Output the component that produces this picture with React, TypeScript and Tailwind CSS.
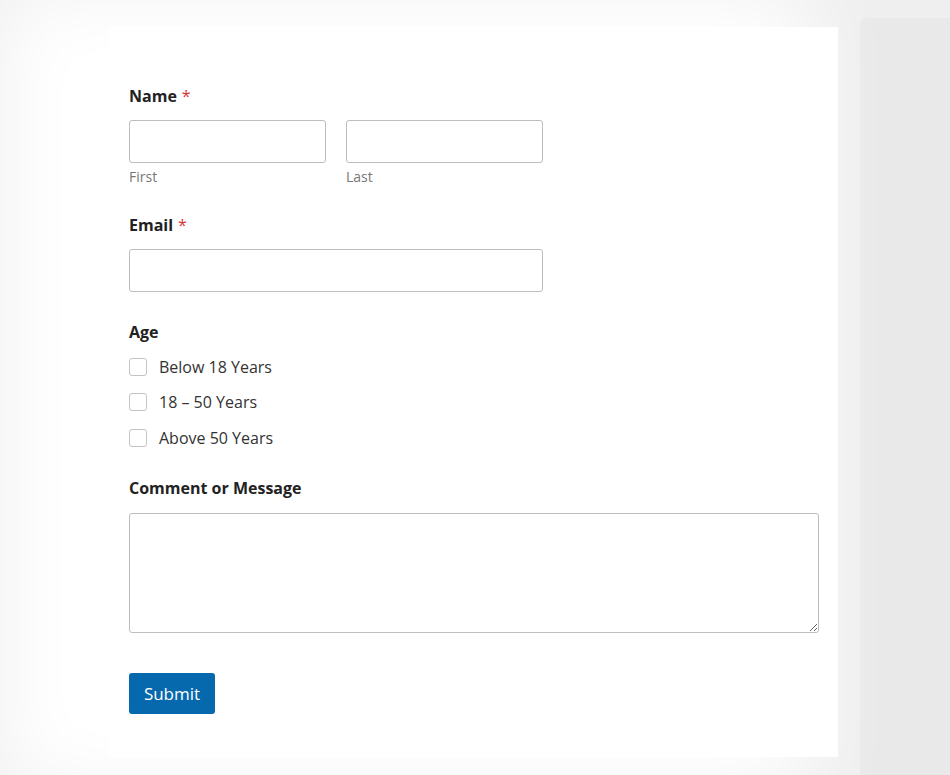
import React from "react";

const font = { fontFamily: '"Open Sans", "Noto Sans", Arial, sans-serif' };

function Label({ children, required }: { children: React.ReactNode; required?: boolean }) {
  return (
    <div className="text-[16px] leading-[22px] font-bold text-[#222]">
      {children}
      {required && <span className="text-[#d63638] font-normal ml-[5px]">*</span>}
    </div>
  );
}

function Check({ label }: { label: string }) {
  return (
    <label className="flex items-center h-[35.5px]">
      <span className="w-[18px] h-[18px] border border-[#c4c4c4] rounded-[3px] bg-white" />
      <span className="ml-[12px] text-[16px] leading-[22px] text-[#333]">{label}</span>
    </label>
  );
}

export default function App() {
  return (
    <div style={font} className="h-[775px] w-[950px] overflow-hidden bg-[#efefef] flex items-start">
      <div className="ml-[109px] mt-[27px] w-[729px] bg-white shadow-[-70px_0_80px_40px_#ffffff] pt-[58px] px-[20px] pb-[43px] shrink-0 relative z-0">
        <Label required>Name</Label>
        <div className="flex gap-[20px] mt-[13px]">
          <div className="w-[197px]">
            <div className="h-[43px] border border-[#bdbdbd] rounded-[3px]" />
            <div className="mt-[4px] text-[14px] leading-[20px] text-[#777]">First</div>
          </div>
          <div className="w-[197px]">
            <div className="h-[43px] border border-[#bdbdbd] rounded-[3px]" />
            <div className="mt-[4px] text-[14px] leading-[20px] text-[#777]">Last</div>
          </div>
        </div>

        <div className="mt-[27px]">
          <Label required>Email</Label>
        </div>
        <div className="mt-[13px] w-[414px] h-[43px] border border-[#bdbdbd] rounded-[3px]" />

        <div className="mt-[29px]">
          <Label>Age</Label>
        </div>
        <div className="mt-[6px] flex flex-col">
          <Check label="Below 18 Years" />
          <Check label="18 – 50 Years" />
          <Check label="Above 50 Years" />
        </div>

        <div className="mt-[21.5px]">
          <Label>Comment or Message</Label>
        </div>
        <textarea
          className="mt-[14px] block w-[690px] h-[120px] border border-[#bdbdbd] rounded-[3px] outline-none resize-y"
          aria-label="Comment or Message"
        />

        <button
          className="mt-[40px] block w-[86px] h-[41px] bg-[#0769ad] text-white text-[17px] leading-[24px] rounded-[3px]"
        >
          Submit
        </button>
      </div>
      <div className="ml-[22px] mt-[18px] flex-1 h-[800px] bg-[#e9e9e9] rounded-tl-[6px]" />
    </div>
  );
}
